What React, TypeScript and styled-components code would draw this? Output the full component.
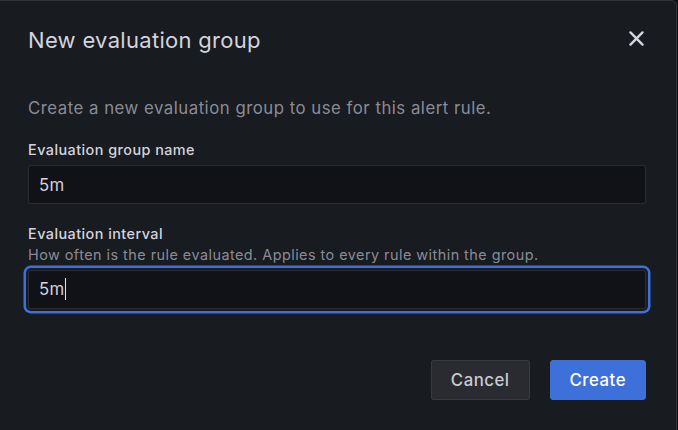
import styled, { createGlobalStyle } from 'styled-components';

const GlobalStyle = createGlobalStyle`
  html, body {
    margin: 0;
    padding: 0;
    background: #111217;
  }
  body {
    font-family: Inter, "Noto Sans", "Liberation Sans", sans-serif;
    -webkit-font-smoothing: antialiased;
  }
  * {
    box-sizing: border-box;
  }
`;

const Modal = styled.div`
  width: 677px;
  min-height: 430px;
  background: #181b1f;
  border-top: 1px solid rgba(204, 204, 220, 0.14);
  border-right: 1px solid rgba(204, 204, 220, 0.14);
  border-top-right-radius: 6px;
  padding: 26px 30px 0 28px;
  display: flex;
  flex-direction: column;
`;

const Header = styled.div`
  display: flex;
  align-items: center;
  justify-content: space-between;
`;

const Title = styled.h2`
  margin: 0;
  font-size: 22px;
  line-height: 27px;
  font-weight: 400;
  letter-spacing: 0.3px;
  color: #d3d4de;
`;

const CloseButton = styled.button`
  width: 29px;
  height: 29px;
  padding: 0;
  margin: -4px -5px 0 0;
  border: none;
  background: transparent;
  color: #d3d4de;
  display: flex;
  align-items: center;
  justify-content: center;
  cursor: pointer;
`;

const Description = styled.p`
  margin: 42px 0 0;
  font-size: 16.8px;
  line-height: 25px;
  letter-spacing: 0.5px;
  color: rgba(204, 204, 220, 0.65);
`;

const Field = styled.div<{ $first?: boolean }>`
  display: flex;
  flex-direction: column;
  margin-top: ${({ $first }) => ($first ? '20px' : '21px')};
`;

const Label = styled.label`
  font-size: 14.4px;
  line-height: 18px;
  font-weight: 500;
  letter-spacing: 0.45px;
  color: #d3d4de;
`;

const Helper = styled.div`
  margin-top: 1px;
  font-size: 14.4px;
  line-height: 21.6px;
  letter-spacing: 0.47px;
  color: rgba(204, 204, 220, 0.65);
`;

const InputBox = styled.div<{ $focused?: boolean; $gap: number }>`
  margin-top: ${({ $gap }) => $gap}px;
  height: 39px;
  display: flex;
  align-items: center;
  padding: 0 10px;
  background: #111217;
  border: 1px solid rgba(204, 204, 220, 0.14);
  border-radius: 3px;
  font-size: 16.8px;
  letter-spacing: 0.4px;
  color: #d3d4de;
  box-shadow: ${({ $focused }) =>
    $focused ? '0 0 0 2px #181b1f, 0 0 0 4.5px #3d71d9' : 'none'};
`;

const Caret = styled.span`
  display: inline-block;
  width: 1px;
  height: 22px;
  margin-left: 0;
  background: #e6e6ee;
`;

const Footer = styled.div`
  display: flex;
  justify-content: flex-end;
  gap: 20px;
  margin-top: 51px;
`;

const Button = styled.button<{ $variant: 'primary' | 'secondary' }>`
  height: 40px;
  padding: 0 19px;
  border-radius: 3px;
  font-family: inherit;
  font-size: 16.8px;
  font-weight: 500;
  letter-spacing: 0.5px;
  cursor: pointer;
  border: 1px solid
    ${({ $variant }) => ($variant === 'primary' ? '#3d71d9' : 'rgba(204, 204, 220, 0.1)')};
  background: ${({ $variant }) => ($variant === 'primary' ? '#3d71d9' : '#2a2b30')};
  color: ${({ $variant }) => ($variant === 'primary' ? '#ffffff' : '#c9cad4')};
`;

function TimesIcon() {
  return (
    <svg width="29" height="29" viewBox="0 0 24 24" fill="currentColor">
      <path d="M13.41,12l4.3-4.29a1,1,0,1,0-1.42-1.42L12,10.59,7.71,6.29A1,1,0,0,0,6.29,7.71L10.59,12l-4.3,4.29a1,1,0,0,0,0,1.420,1,1,0,0,0,1.42,0L12,13.41l4.29,4.3a1,1,0,0,0,1.42,0,1,1,0,0,0,0-1.42Z" />
    </svg>
  );
}

export default function App() {
  return (
    <>
      <GlobalStyle />
      <Modal>
        <Header>
          <Title>New evaluation group</Title>
          <CloseButton aria-label="Close">
            <TimesIcon />
          </CloseButton>
        </Header>
        <Description>Create a new evaluation group to use for this alert rule.</Description>

        <Field $first>
          <Label>Evaluation group name</Label>
          <InputBox $gap={6}>5m</InputBox>
        </Field>

        <Field>
          <Label>Evaluation interval</Label>
          <Helper>How often is the rule evaluated. Applies to every rule within the group.</Helper>
          <InputBox $gap={4} $focused>
            5m
            <Caret />
          </InputBox>
        </Field>

        <Footer>
          <Button $variant="secondary">Cancel</Button>
          <Button $variant="primary">Create</Button>
        </Footer>
      </Modal>
    </>
  );
}
